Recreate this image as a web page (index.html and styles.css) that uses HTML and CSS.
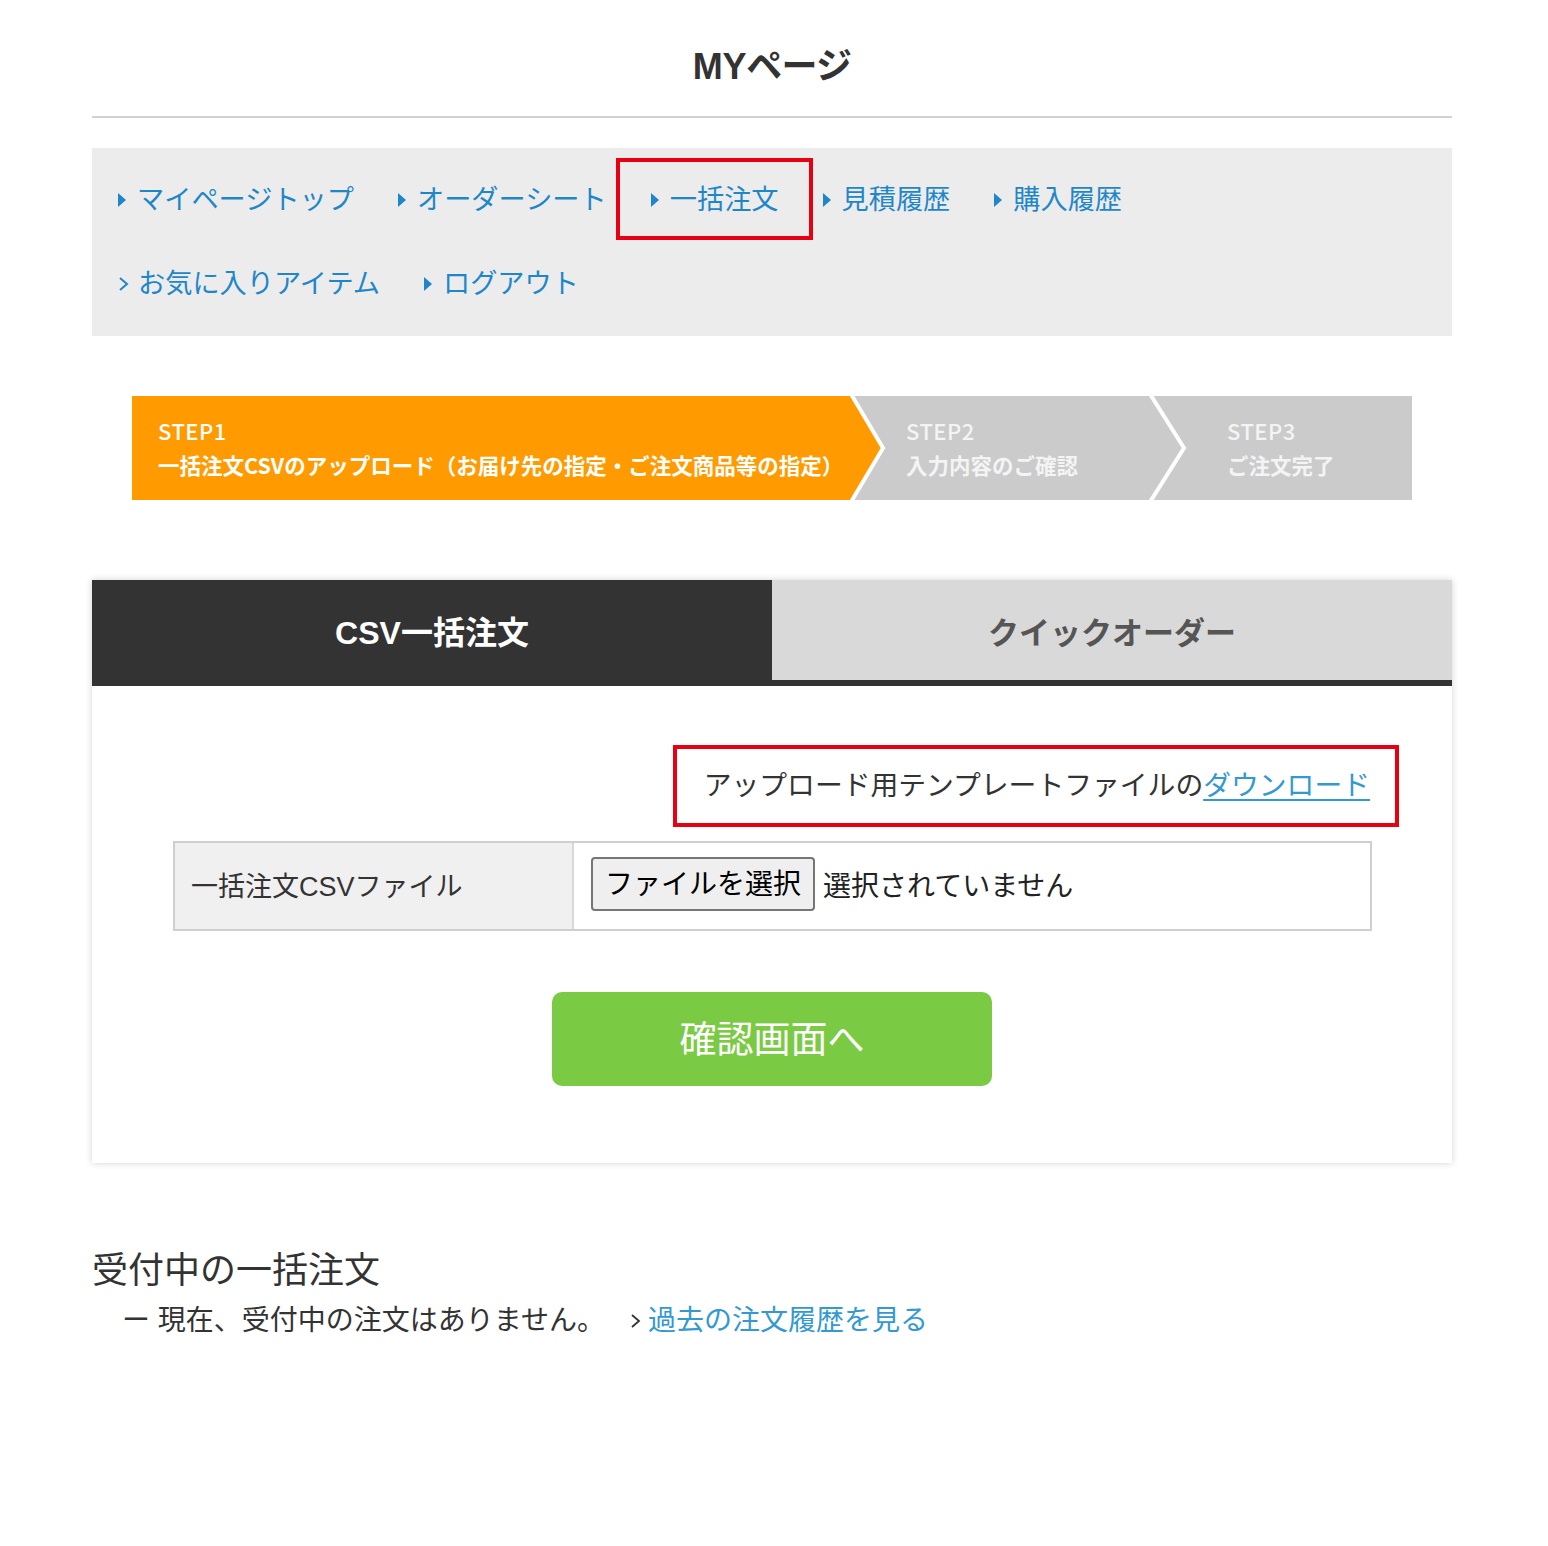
FILE: index.html
```html
<!DOCTYPE html>
<html lang="ja">
<head>
<meta charset="utf-8">
<title>MYページ</title>
<link rel="stylesheet" href="styles.css">
</head>
<body>
<div class="page">
  <h1 class="title">MYページ</h1>

  <nav class="mynav">
    <ul class="mynav-list">
      <li class="mynav-item"><span class="tri"></span><a href="#">マイページトップ</a></li>
      <li class="mynav-item"><span class="tri"></span><a href="#">オーダーシート</a></li>
      <li class="mynav-item is-marked"><span class="tri"></span><a href="#">一括注文</a></li>
      <li class="mynav-item"><span class="tri"></span><a href="#">見積履歴</a></li>
      <li class="mynav-item"><span class="tri"></span><a href="#">購入履歴</a></li>
      <li class="mynav-item"><svg class="chev" width="12" height="16" viewBox="0 0 12 16" aria-hidden="true"><polyline points="2,2 9,8 2,14" fill="none" stroke="#1f87c8" stroke-width="2"/></svg><a href="#">お気に入りアイテム</a></li>
      <li class="mynav-item"><span class="tri"></span><a href="#">ログアウト</a></li>
    </ul>
  </nav>

  <div class="steps">
    <svg class="steps-bg" width="1280" height="104" viewBox="0 0 1280 104" aria-hidden="true">
      <rect x="0" y="0" width="1280" height="104" fill="#cbcbcb"/>
      <polygon points="0,0 718,0 750,52 718,104 0,104" fill="#ff9b00"/>
      <polyline points="719,-2 751,52 719,106" fill="none" stroke="#ffffff" stroke-width="4"/>
      <polyline points="1018,-2 1052,52 1018,106" fill="none" stroke="#ffffff" stroke-width="4"/>
    </svg>
    <div class="step step1">
      <div class="step-num">STEP1</div>
      <div class="step-label">一括注文CSVのアップロード（お届け先の指定・ご注文商品等の指定）</div>
    </div>
    <div class="step step2">
      <div class="step-num">STEP2</div>
      <div class="step-label">入力内容のご確認</div>
    </div>
    <div class="step step3">
      <div class="step-num">STEP3</div>
      <div class="step-label">ご注文完了</div>
    </div>
  </div>

  <section class="panel">
    <div class="tabs">
      <div class="tab tab-active">CSV一括注文</div>
      <div class="tab tab-inactive">クイックオーダー</div>
    </div>
    <div class="panel-body">
      <div class="dl-row">
        <p class="dl-text">アップロード用テンプレートファイルの<a href="#" class="dl-link">ダウンロード</a></p>
      </div>
      <div class="file-table">
        <div class="file-th">一括注文CSVファイル</div>
        <div class="file-td">
          <span class="file-btn">ファイルを選択</span>
          <span class="file-none">選択されていません</span>
        </div>
      </div>
      <div class="submit-row">
        <button class="submit-btn" type="button">確認画面へ</button>
      </div>
    </div>
  </section>

  <section class="pending">
    <h2 class="pending-title">受付中の一括注文</h2>
    <p class="pending-line"><span class="pending-none">ー 現在、受付中の注文はありません。</span><svg class="chev chev-gray" width="12" height="16" viewBox="0 0 12 16" aria-hidden="true"><polyline points="2,2 9,8 2,14" fill="none" stroke="#333" stroke-width="1.8"/></svg><a href="#" class="pending-link">過去の注文履歴を見る</a></p>
  </section>
</div>
</body>
</html>
```

FILE: styles.css
```css
* { box-sizing: border-box; }
html, body { margin: 0; padding: 0; background: #fff; }
body {
  font-family: "Liberation Sans", "Noto Sans CJK JP", sans-serif;
  color: #333;
}
a { text-decoration: none; }

.page {
  width: 1360px;
  margin-left: 92px;
  padding-bottom: 200px;
}

.title {
  margin: 0;
  padding-top: 45px;
  height: 118px;
  text-align: center;
  font-size: 36px;
  font-weight: 700;
  line-height: 44px;
  color: #333;
  font-feature-settings: "palt";
  border-bottom: 2px solid #d2d2d2;
}

.mynav {
  margin-top: 30px;
  background: #ececec;
  height: 188px;
  padding: 31px 0 0 26px;
}
.mynav-list {
  list-style: none;
  margin: 0;
  padding: 0;
  display: flex;
  flex-wrap: wrap;
  width: 1100px;
}
.mynav-item {
  position: relative;
  display: flex;
  align-items: center;
  height: 42px;
  margin: 0 44px 42px 0;
  font-size: 27.2px;
  line-height: 42px;
}
.mynav-item a { color: #1f87c8; }
.tri {
  width: 0;
  height: 0;
  border-left: 8px solid #1f87c8;
  border-top: 7px solid transparent;
  border-bottom: 7px solid transparent;
  margin-right: 11px;
}
.chev {
  display: block;
  margin-right: 8px;
  flex: none;
}
.is-marked::after {
  content: "";
  position: absolute;
  left: -35px;
  right: -34px;
  top: -21px;
  bottom: -19px;
  border: 4px solid #e60012;
}

.steps {
  position: relative;
  margin: 60px 40px 0 40px;
  height: 104px;
  display: flex;
  color: #fff;
}
.steps-bg {
  position: absolute;
  left: 0;
  top: 0;
}
.step {
  position: relative;
  padding-top: 19px;
  font-family: "Noto Sans CJK JP", sans-serif;
  font-weight: 700;
}
.step1 { width: 774px; padding-left: 26px; }
.step2 { width: 321px; }
.step3 { flex: 1; }
.step2, .step3 { color: #f4f4f4; }
.step-num {
  font-size: 22px;
  line-height: 30px;
  font-weight: 500;
  letter-spacing: 0.5px;
}
.step-label {
  margin-top: 4px;
  font-size: 21.5px;
  line-height: 32px;
}

.panel {
  margin-top: 80px;
  background: #fff;
  box-shadow: 0 0 7px rgba(0,0,0,0.18);
  height: 583px;
}
.tabs {
  display: flex;
  border-bottom: 6px solid #333;
}
.tab {
  flex: 1;
  height: 100px;
  display: flex;
  align-items: center;
  justify-content: center;
  font-size: 32px;
  font-weight: 700;
}
.tab-active { background: #333; color: #fff; }
.tab-inactive { background: #d9d9d9; color: #555; font-size: 31px; }

.panel-body {
  padding: 59px 81px 0 81px;
}
.dl-row {
  display: flex;
  justify-content: flex-end;
  padding-right: 1px;
}
.dl-text {
  position: relative;
  margin: 0;
  font-size: 27.8px;
  line-height: 82px;
  color: #333;
}
.dl-text::after {
  content: "";
  position: absolute;
  left: -31px;
  right: -29px;
  top: 0;
  bottom: 0;
  border: 4px solid #e60012;
}
.dl-link {
  color: #3399d0;
  text-decoration: underline;
  text-underline-offset: 4px;
}

.file-table {
  margin-top: 14px;
  display: flex;
  border: 2px solid #cfcfcf;
  height: 90px;
  width: 1199px;
}
.file-th {
  width: 399px;
  background: #f0f0f0;
  border-right: 2px solid #d8d8d8;
  display: flex;
  align-items: center;
  padding-left: 16px;
  padding-bottom: 4px;
  font-size: 27px;
  color: #333;
}
.file-td {
  flex: 1;
  display: flex;
  align-items: center;
  padding-left: 17px;
  padding-bottom: 4px;
  font-size: 28px;
  color: #222;
}
.file-btn {
  display: inline-flex;
  align-items: center;
  height: 54px;
  padding: 0 12px 4px;
  background: #efefef;
  border: 2px solid #767676;
  border-radius: 4px;
  color: #000;
  margin-right: 8px;
}

.submit-row {
  display: flex;
  justify-content: center;
  margin-top: 61px;
}
.submit-btn {
  width: 440px;
  height: 94px;
  border: 0;
  border-radius: 10px;
  background: #7bca43;
  color: #fff;
  font-family: "Liberation Sans", "Noto Sans CJK JP", sans-serif;
  font-size: 37px;
  padding-bottom: 6px;
  cursor: pointer;
}

.pending { margin-top: 82px; }
.pending-title {
  margin: 0;
  font-size: 36px;
  font-weight: 400;
  line-height: 52px;
  color: #333;
}
.pending-line {
  margin: 2px 0 0 30px;
  font-size: 28px;
  line-height: 44px;
  display: flex;
  align-items: center;
}
.pending-none { color: #333; margin-right: 25px; }
.chev-gray { margin-right: 6px; }
.pending-link { color: #3399d0; }
```
